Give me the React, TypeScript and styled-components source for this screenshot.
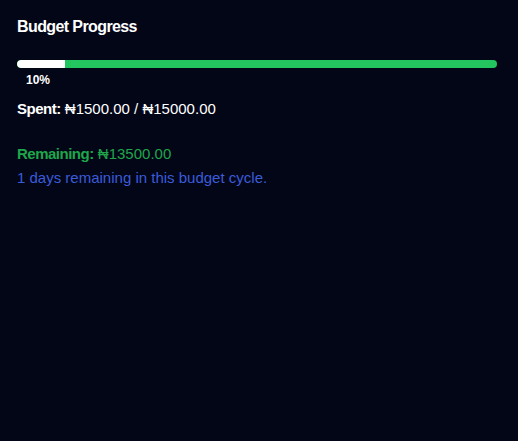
import React from 'react';
import styled, { createGlobalStyle } from 'styled-components';

const GlobalStyle = createGlobalStyle`
  html, body {
    margin: 0;
    padding: 0;
    background: #020617;
  }
  body {
    font-family: "Liberation Sans", Arial, sans-serif;
  }
`;

const Card = styled.div`
  width: 518px;
  height: 441px;
  box-sizing: border-box;
  padding: 17px 21px 17px 17px;
  background: #020617;
  color: #ffffff;
  display: flex;
  flex-direction: column;
`;

const Title = styled.h2`
  margin: 0;
  font-size: 16px;
  line-height: 20px;
  font-weight: 700;
  letter-spacing: -0.6px;
  color: #ffffff;
`;

const Track = styled.div`
  margin-top: 23px;
  height: 8px;
  border-radius: 4px;
  background: #22c55e;
  overflow: hidden;
  display: flex;
`;

const Fill = styled.div`
  height: 100%;
  background: #ffffff;
  border-radius: 4px 0 0 4px;
`;

const Label = styled.div`
  margin-top: 5px;
  padding-left: 9px;
  font-size: 12px;
  line-height: 14px;
  font-weight: 700;
  color: #ffffff;
`;

const Line = styled.p<{ $color?: string; $top: number }>`
  margin: ${p => p.$top}px 0 0 0;
  font-size: 15px;
  line-height: 18px;
  color: ${p => p.$color || '#ffffff'};
`;

const Strong = styled.strong`
  font-weight: 700;
  letter-spacing: -0.5px;
`;

const budget = 15000;
const spent = 1500;

export default function App() {
  const pct = Math.round((spent / budget) * 100);
  return (
    <>
      <GlobalStyle />
      <Card>
        <Title>Budget Progress</Title>
        <Track>
          <Fill style={{ width: `${pct}%` }} />
        </Track>
        <Label>{pct}%</Label>
        <Line $top={13}>
          <Strong>Spent:</Strong> ₦{spent.toFixed(2)} / ₦{budget.toFixed(2)}
        </Line>
        <Line $top={27} $color="#1fa64a">
          <Strong>Remaining:</Strong> ₦{(budget - spent).toFixed(2)}
        </Line>
        <Line $top={6} $color="#3b5bd9">
          1 days remaining in this budget cycle.
        </Line>
      </Card>
    </>
  );
}
